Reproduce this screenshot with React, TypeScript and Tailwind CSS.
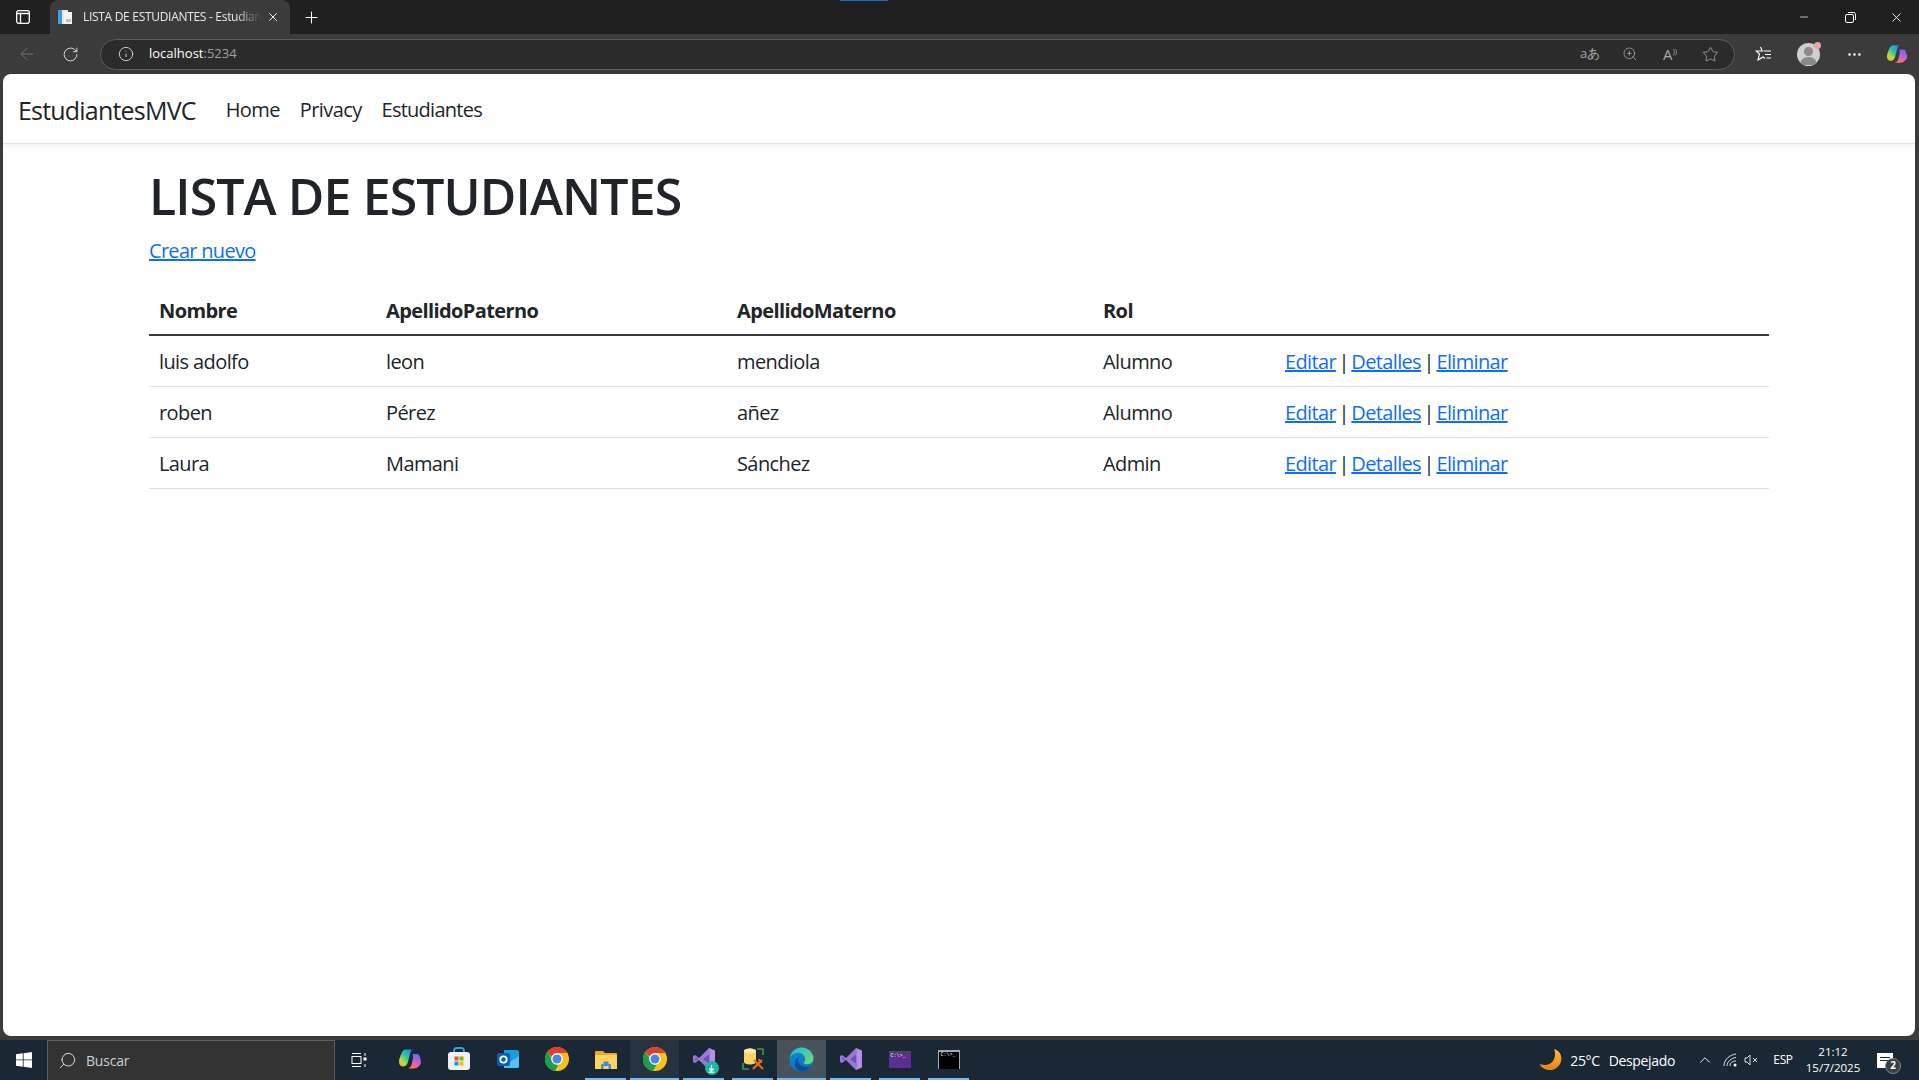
import React from 'react';
import { ArrowLeft, RotateCw, Info, Search, ZoomIn, Star, X, Plus, Minus, ChevronUp, MoreHorizontal } from 'lucide-react';

const students = [
  { nombre: 'luis adolfo', paterno: 'leon', materno: 'mendiola', rol: 'Alumno' },
  { nombre: 'roben', paterno: 'Pérez', materno: 'añez', rol: 'Alumno' },
  { nombre: 'Laura', paterno: 'Mamani', materno: 'Sánchez', rol: 'Admin' },
];

const CopilotIcon = ({ id, size = 22 }: { id: string; size?: number }) => (
  <svg width={size} height={size} viewBox="0 0 24 24">
    <defs>
      <linearGradient id={`${id}a`} x1="0.9" y1="0" x2="0.1" y2="1">
        <stop offset="0" stopColor="#1f86e8" />
        <stop offset="0.45" stopColor="#2fc7a0" />
        <stop offset="0.75" stopColor="#c6d838" />
        <stop offset="1" stopColor="#f8a23a" />
      </linearGradient>
      <linearGradient id={`${id}b`} x1="0.7" y1="0" x2="0.4" y2="1">
        <stop offset="0" stopColor="#5a6fe8" />
        <stop offset="0.4" stopColor="#b05ee0" />
        <stop offset="0.8" stopColor="#f0649a" />
        <stop offset="1" stopColor="#f8843c" />
      </linearGradient>
    </defs>
    <path d="M8 2.500h6.500c-1.500 1-2 2.500-2.500 4.500l-2 8c-.7 2.500-2.500 4.500-5 4.500C2.500 19.500 1 17.500 1 15c0-3 2-8 3.500-10.500C5.500 3 6.500 2.500 8 2.500z" fill={`url(#${id}a)`} />
    <path d="M14 7h5c2 0 2.500 1.500 3 3.500.6 2.500 1 3.500 1 4.500 0 3-4 6.500-7 6.500H9.500c2.500-.5 3.500-2 4-4l1.500-6c.3-1.500 0-3-.5-4.500z" fill={`url(#${id}b)`} />
  </svg>
);

const ChromeIcon = ({ size = 24 }: { size?: number }) => (
  <svg width={size} height={size} viewBox="0 0 24 24">
    <circle cx="12" cy="12" r="12" fill="#fbc116" />
    <path d="M12 0a12 12 0 0 1 10.400 6H12a6 6 0 0 0-5.600 3.800L2.400 4.800A12 12 0 0 1 12 0z" fill="#de3f33" />
    <path d="M2.400 4.800 7 12a6 6 0 0 0 6.500 5.800L10 24A12 12 0 0 1 2.400 4.800z" fill="#1e9e4d" />
    <circle cx="12" cy="12" r="5.800" fill="#fff" />
    <circle cx="12" cy="12" r="4.500" fill="#4a86ee" />
  </svg>
);

const EdgeIcon = () => (
  <svg width="25" height="25" viewBox="0 0 24 24">
    <defs>
      <linearGradient id="edgeBody" x1="0" y1="0" x2="0.6" y2="1">
        <stop offset="0" stopColor="#0d8fd8" />
        <stop offset="1" stopColor="#0b6fc0" />
      </linearGradient>
      <linearGradient id="edgeTop" x1="0" y1="0" x2="1" y2="1">
        <stop offset="0" stopColor="#28b8d8" />
        <stop offset="1" stopColor="#6fdc6a" />
      </linearGradient>
    </defs>
    <circle cx="12" cy="12" r="11.500" fill="url(#edgeBody)" />
    <path d="M1 10C2.500 4 7 .5 12 .5c6.500 0 11.500 5 11.500 10.500 0 3.500-3 5.500-6 5.500-2 0-3.500-.7-3.500-1.500 0-.6 1.500-1.200 1.500-3.500C15.500 8 12 5.500 8.500 5.500 5.500 5.500 2.500 7.500 1 10z" fill="url(#edgeTop)" />
    <path d="M21 17.500c-1.500 1-3.200 1.500-5 1.500-4 0-7.500-3-7.500-6.500 0-1.300.8-2.500 2-3.200C7.500 9.500 5.500 12.500 5.500 15.500c0 3.500 2.500 7 6.500 8 3.500.2 7-2.500 9-6z" fill="#0a4f9a" />
  </svg>
);

const VsIcon = () => (
  <svg width="24" height="24" viewBox="0 0 24 24">
    <path d="M17 1l6 2.500v17L17 23V1z" fill="#b48ee8" />
    <path d="M17 1 7 11 3 8 1 9v6l2 1 4-3 10 10 1-3V4z" fill="#9a78d8" />
    <path d="M17 7.500V16.500L11 12z" fill="#6f4fb5" />
    <path d="M3.500 10v4L6 12z" fill="#6f4fb5" />
  </svg>
);

const items = [
  { key: 'copilot', icon: <CopilotIcon id="tb" size={24} /> },
  {
    key: 'store',
    icon: (
      <svg width="24" height="24" viewBox="0 0 24 24">
        <path d="M7 6V4a3 3 0 0 1 3-3h4a3 3 0 0 1 3 3v2" fill="none" stroke="#2aa7e0" strokeWidth="1.800" />
        <rect x="1" y="5" width="22" height="18" rx="3" fill="#eef0f1" />
        <rect x="7.500" y="9.500" width="4" height="4" fill="#f25022" />
        <rect x="12.500" y="9.500" width="4" height="4" fill="#7fba00" />
        <rect x="7.500" y="14.500" width="4" height="4" fill="#00a4ef" />
        <rect x="12.500" y="14.500" width="4" height="4" fill="#ffb900" />
      </svg>
    ),
  },
  {
    key: 'outlook',
    icon: (
      <svg width="24" height="24" viewBox="0 0 24 24">
        <path d="M8 3h13a2 2 0 0 1 2 2v14a2 2 0 0 1-2 2H8z" fill="#1b9de2" />
        <path d="M23 9 14 15 8 11v10h13a2 2 0 0 0 2-2z" fill="#50c4f0" />
        <rect x="1" y="6" width="13" height="13" rx="2" fill="#0a5fb4" />
        <circle cx="7.500" cy="12.500" r="3.200" fill="none" stroke="#fff" strokeWidth="1.800" />
      </svg>
    ),
  },
  { key: 'chrome1', icon: <ChromeIcon /> },
  {
    key: 'files',
    running: true,
    icon: (
      <svg width="24" height="24" viewBox="0 0 24 24">
        <path d="M1 5a1 1 0 0 1 1-1h7l2 2h11a1 1 0 0 1 1 1v14a1 1 0 0 1-1 1H2a1 1 0 0 1-1-1z" fill="#e8a92c" />
        <rect x="1" y="8" width="22" height="14" rx="1" fill="#fcd462" />
        <path d="M7 22v-4a1 1 0 0 1 1-1h1.500v-2.500h5V17H16a1 1 0 0 1 1 1v4h-2.500v-3h-5v3z" fill="#3d8fd6" />
      </svg>
    ),
  },
  { key: 'chrome2', active: 'soft', running: true, icon: <ChromeIcon /> },
  {
    key: 'vsinstaller',
    running: true,
    icon: (
      <div className="relative">
        <VsIcon />
        <div className="absolute -right-[3px] -bottom-[4px] w-[14px] h-[14px] rounded-full bg-[#1fb5a5] flex items-center justify-center">
          <svg width="9" height="9" viewBox="0 0 10 10">
            <path d="M5 1v6M2.500 5 5 7.500 7.500 5M2 9h6" stroke="#fff" strokeWidth="1.300" fill="none" />
          </svg>
        </div>
      </div>
    ),
  },
  {
    key: 'db',
    running: true,
    icon: (
      <svg width="24" height="24" viewBox="0 0 24 24">
        <path d="M16 2h6v6M8 22H2v-6" fill="none" stroke="#2f9d47" strokeWidth="1.600" />
        <path d="M3 4c0-1.500 3-2.500 6-2.500s6 1 6 2.500v11c0 1.500-3 2.500-6 2.500s-6-1-6-2.500z" fill="#f6d566" />
        <ellipse cx="9" cy="4" rx="6" ry="2.500" fill="#fbe9a4" />
        <path d="M12 22l9-9M13 13l9 9M18 12a3 3 0 0 0 3 3" stroke="#e8701a" strokeWidth="2" fill="none" />
      </svg>
    ),
  },
  { key: 'edge', active: 'strong', running: true, icon: <EdgeIcon /> },
  { key: 'vs', running: true, icon: <VsIcon /> },
  {
    key: 'term1',
    running: true,
    icon: (
      <div className="w-[22px] h-[17px] bg-[#5b2e91] border-t-2 border-[#4a4a58] text-[5px] leading-[7px] text-white pl-[2px]" style={{ fontFamily: 'Liberation Mono, monospace' }}>
        C:\&gt;_
      </div>
    ),
  },
  {
    key: 'term2',
    running: true,
    icon: (
      <div className="w-[22px] h-[19px] bg-black border-t-2 border-x border-[#a8a8a8] text-[5px] leading-[7px] text-white pl-[2px]" style={{ fontFamily: 'Liberation Mono, monospace' }}>
        C:\&gt;_
      </div>
    ),
  },
];

const RowLinks = () => (
  <>
    <a href="#" className="text-[#0d6efd] underline">Editar</a> | <a href="#" className="text-[#0d6efd] underline">Detalles</a> | <a href="#" className="text-[#0d6efd] underline">Eliminar</a>
  </>
);

export default function App() {
  return (
    <div className="h-screen w-full flex flex-col overflow-hidden bg-[#3b3b3b]" style={{ fontFamily: '"Open Sans", "Noto Sans", sans-serif' }}>
      {/* tab strip */}
      <div className="h-[34px] shrink-0 bg-[#202020] flex items-end text-white relative">
        <div className="absolute top-0 left-[840px] w-[48px] h-[1px] bg-[#0a6cc8]" />
        <div className="w-[50px] h-full flex items-center pl-[16px]">
          <svg width="14" height="14" viewBox="0 0 14 14" fill="none" stroke="#fff" strokeWidth="1.300">
            <rect x="0.700" y="0.700" width="12.600" height="12.600" rx="2" />
            <path d="M0.700 3.500H13.300M4.500 3.500V13" />
          </svg>
        </div>
        <div className="w-[240px] h-[34px] bg-[#3b3b3b] rounded-t-lg flex items-center pl-[7px] pr-[10px]">
          <svg width="16" height="16" viewBox="0 0 16 16" className="shrink-0">
            <rect x="1" y="1" width="10" height="14" fill="#dfe8ef" />
            <rect x="1" y="1" width="4" height="14" fill="#4a9ad4" />
            <rect x="7" y="3" width="8" height="12" fill="#f4f4f4" />
            <rect x="9" y="10" width="5" height="3" fill="#b8c4cc" />
          </svg>
          <span className="ml-[10px] w-[179px] overflow-hidden whitespace-nowrap text-[12px] tracking-[-0.3px] text-[#e8e8e8] [mask-image:linear-gradient(to_right,black_86%,transparent)]">LISTA DE ESTUDIANTES - Estudian</span>
          <X size={14} strokeWidth={1.6} className="ml-[5px] shrink-0" />
        </div>
        <div className="w-[42px] h-full flex items-center justify-center">
          <Plus size={19} strokeWidth={1.3} />
        </div>
        <div className="flex-1" />
        <div className="h-full flex items-center text-white">
          <div className="w-[46px] flex justify-center"><Minus size={12} strokeWidth={1.4} /></div>
          <div className="w-[46px] flex justify-center">
            <svg width="11" height="11" viewBox="0 0 11 11" fill="none" stroke="currentColor">
              <rect x="0.500" y="2.500" width="8" height="8" rx="1.500" />
              <path d="M3 .5h5.500a2 2 0 0 1 2 2V8" />
            </svg>
          </div>
          <div className="w-[46px] flex justify-center"><X size={15} strokeWidth={1.4} /></div>
        </div>
      </div>

      {/* toolbar */}
      <div className="h-[40px] shrink-0 flex items-center text-[#d0d0d0]">
        <div className="w-[53px] flex justify-center text-[#777]"><ArrowLeft size={20} strokeWidth={1.1} /></div>
        <div className="w-[35px] flex justify-center text-[#e0e0e0]"><RotateCw size={17} strokeWidth={1.3} /></div>
        <div className="ml-[12px] w-[1635px] h-[31px] rounded-full bg-[#2b2b2b] border border-[#5d5d5d] flex items-center">
          <Info size={16} strokeWidth={1.3} className="ml-[17px] text-[#e0e0e0]" />
          <span className="ml-[15px] text-[13px] text-white">localhost<span className="text-[#a0a0a0]">:5234</span></span>
          <div className="flex-1" />
          <div className="flex items-center text-[#a8a8a8]">
            <span className="w-[40px] text-center text-[13px]">aあ</span>
            <div className="w-[40px] flex justify-center"><ZoomIn size={16} strokeWidth={1.2} /></div>
            <span className="w-[40px] text-center text-[15px]">A<span className="text-[8px] align-super">))</span></span>
            <div className="w-[40px] flex justify-center"><Star size={17} strokeWidth={1.2} /></div>
          </div>
          <div className="w-[4px]" />
        </div>
        <div className="w-[55px] flex justify-center text-white">
          <svg width="18" height="16" viewBox="0 0 18 16" fill="none" stroke="currentColor" strokeWidth="1.100">
            <path d="M6.500 1 8.200 5h-6l3.300 3L4 14l5-3 2 1.500" />
            <path d="M9.500 5H17M11 8.500h6M12.500 12H17" />
          </svg>
        </div>
        <div className="w-[37px] flex justify-center">
          <div className="relative w-[23px] h-[23px]">
            <div className="w-[23px] h-[23px] rounded-full bg-[#cfcfcf] overflow-hidden flex flex-col items-center pt-[4px]">
              <div className="w-[9px] h-[9px] rounded-full bg-[#8a8a8a]" />
              <div className="w-[17px] h-[8px] mt-[1px] rounded-t-full bg-[#8a8a8a]" />
            </div>
            <div className="absolute -top-[1px] -right-[1px] w-[7px] h-[7px] rounded-full bg-[#f4a0a0]" />
          </div>
        </div>
        <div className="w-[55px] flex justify-center text-white"><MoreHorizontal size={17} strokeWidth={1.6} /></div>
        <div className="w-[30px] flex justify-center"><CopilotIcon id="tool" /></div>
      </div>

      {/* page */}
      <div className="flex-1 min-h-0 ml-[3px] mr-[4px] bg-white rounded-lg overflow-hidden text-[#212529] text-[20px] leading-[30px]">
        <nav className="h-[70px] border-b border-[#e4e5e6] shadow-[0_2px_5px_rgba(0,0,0,0.06)] flex items-center pl-[15px] pt-[2px]">
          <span className="text-[25px] tracking-[-0.8px]">EstudiantesMVC</span>
          <div className="ml-[20px] flex">
            <a className="px-[10px] tracking-[-0.6px]">Home</a>
            <a className="px-[10px] tracking-[-0.6px]">Privacy</a>
            <a className="px-[10px] tracking-[-0.75px]">Estudiantes</a>
          </div>
        </nav>
        <main className="w-[1620px] mx-auto pt-[22px]">
          <h1 className="text-[50px] leading-[60px] font-semibold tracking-[-0.9px]">LISTA DE ESTUDIANTES</h1>
          <p className="mt-[10px]"><a href="#" className="text-[#0d6efd] underline tracking-[-0.7px]">Crear nuevo</a></p>
          <table className="w-[1620px] mt-[18px] table-fixed border-collapse tracking-[-0.6px]">
            <colgroup>
              <col className="w-[227px]" />
              <col className="w-[351px]" />
              <col className="w-[366px]" />
              <col className="w-[182px]" />
              <col className="w-[494px]" />
            </colgroup>
            <thead>
              <tr className="border-b-2 border-[#3a3d40]">
                <th className="pt-[12px] pb-[8px] px-[10px] text-left font-bold">Nombre</th>
                <th className="pt-[12px] pb-[8px] px-[10px] text-left font-bold">ApellidoPaterno</th>
                <th className="pt-[12px] pb-[8px] px-[10px] text-left font-bold">ApellidoMaterno</th>
                <th className="pt-[12px] pb-[8px] px-[10px] text-left font-bold">Rol</th>
                <th className="pt-[12px] pb-[8px] px-[10px]"></th>
              </tr>
            </thead>
            <tbody>
              {students.map(s => (
                <tr key={s.nombre} className="border-b border-[#dee2e6]">
                  <td className="pt-[11px] pb-[9px] px-[10px]">{s.nombre}</td>
                  <td className="pt-[11px] pb-[9px] px-[10px]">{s.paterno}</td>
                  <td className="pt-[11px] pb-[9px] px-[10px]">{s.materno}</td>
                  <td className="pt-[11px] pb-[9px] px-[10px]">{s.rol}</td>
                  <td className="pt-[11px] pb-[9px] px-[10px] [word-spacing:-2px] tracking-[-0.65px]"><RowLinks /></td>
                </tr>
              ))}
            </tbody>
          </table>
        </main>
      </div>

      {/* taskbar */}
      <div className="h-[40px] mt-[4px] shrink-0 bg-[#1a2735] flex items-stretch text-white">
        <div className="w-[47px] flex items-center justify-center">
          <svg width="16" height="16" viewBox="0 0 16 16" fill="#fff">
            <path d="M0 2.300 6.800 1.300V7.500H0zM7.600 1.200 16 0V7.500H7.600zM0 8.300H6.800V14.700L0 13.700zM7.600 8.300H16V16L7.600 14.800z" />
          </svg>
        </div>
        <div className="w-[288px] bg-[#333333] border border-b-0 border-[#5f5f5f] flex items-center pl-[10px]">
          <Search size={19} strokeWidth={1.2} className="-scale-x-100 text-[#e0e0e0]" />
          <span className="ml-[9px] text-[14px] tracking-[-0.2px] text-[#c8d0d8]">Buscar</span>
        </div>
        <div className="w-[50px] flex items-center justify-center pr-[3px]">
          <svg width="16" height="16" viewBox="0 0 16 16" fill="none" stroke="#fff" strokeWidth="1">
            <rect x="1" y="4.500" width="9" height="7" />
            <path d="M1 1.500h9M1 14.500h9M14 1v3M14 12v3" />
            <rect x="13" y="6" width="2" height="2" fill="#fff" />
          </svg>
        </div>
        {items.map(item => (
          <div
            key={item.key}
            className={`w-[49px] flex flex-col ${item.active === 'strong' ? 'bg-[#47525c]' : item.active === 'soft' ? 'bg-[#26323f]' : ''}`}
          >
            <div className="flex-1 flex items-center justify-center">{item.icon}</div>
            <div className={`h-[2px] ${item.running ? 'bg-[#76b9ed]' : ''} ${item.active ? '' : 'mx-[4px]'}`} />
          </div>
        ))}
        <div className="flex-1" />
        <div className="flex items-center text-[14px] tracking-[-0.35px]">
          <svg width="24" height="24" viewBox="0 0 24 24">
            <defs>
              <linearGradient id="moon" x1="0" y1="0" x2="0" y2="1">
                <stop offset="0" stopColor="#fbbf3b" />
                <stop offset="1" stopColor="#ec7d12" />
              </linearGradient>
            </defs>
            <path d="M15 1c7 2 9 9 6 15-3 6-11 8-17 4-2-1-3-3-3-4 5 2 10 1 13-3 2-3 3-8 1-12z" fill="url(#moon)" />
          </svg>
          <span className="ml-[7px]">25°C</span>
          <span className="ml-[9px]">Despejado</span>
          <div className="ml-[21px] w-[18px] flex justify-center"><ChevronUp size={18} strokeWidth={1.2} /></div>
          <svg width="16" height="14" viewBox="0 0 16 14" fill="none" stroke="#ddd" strokeWidth="1" className="ml-[9px]">
            <path d="M1 13C1 7 6 2 13 1M4 13c0-4 4-8 9-8.500M7 13c0-3 2-5 6-5" />
            <circle cx="12" cy="12" r="1.500" fill="#fff" stroke="none" />
          </svg>
          <svg width="16" height="14" viewBox="0 0 16 14" fill="none" stroke="#ddd" strokeWidth="1" className="ml-[5px]">
            <path d="M1 5v4h2l3 3V2L3 5zM9 5l4 4M13 5l-4 4" />
          </svg>
          <span className="ml-[13px] text-[12px] tracking-[-0.4px] w-[20px] text-center">ESP</span>
          <div className="ml-[9px] w-[62px] flex flex-col items-center text-[11.5px] tracking-[0px] leading-[16px]">
            <span>21:12</span>
            <span>15/7/2025</span>
          </div>
          <div className="w-[55px] flex justify-center pr-[13px]">
            <div className="relative w-[16px] h-[15px] bg-white">
              <div className="absolute left-[3px] top-[4px] w-[10px] h-[1px] bg-[#1a2735]" />
              <div className="absolute left-[3px] top-[7px] w-[10px] h-[1px] bg-[#1a2735]" />
              <div className="absolute -right-[8px] top-[5px] w-[16px] h-[16px] rounded-full bg-[#3a3f44] border border-[#888] flex items-center justify-center text-[10px] font-bold">2</div>
            </div>
          </div>
        </div>
      </div>
    </div>
  );
}
